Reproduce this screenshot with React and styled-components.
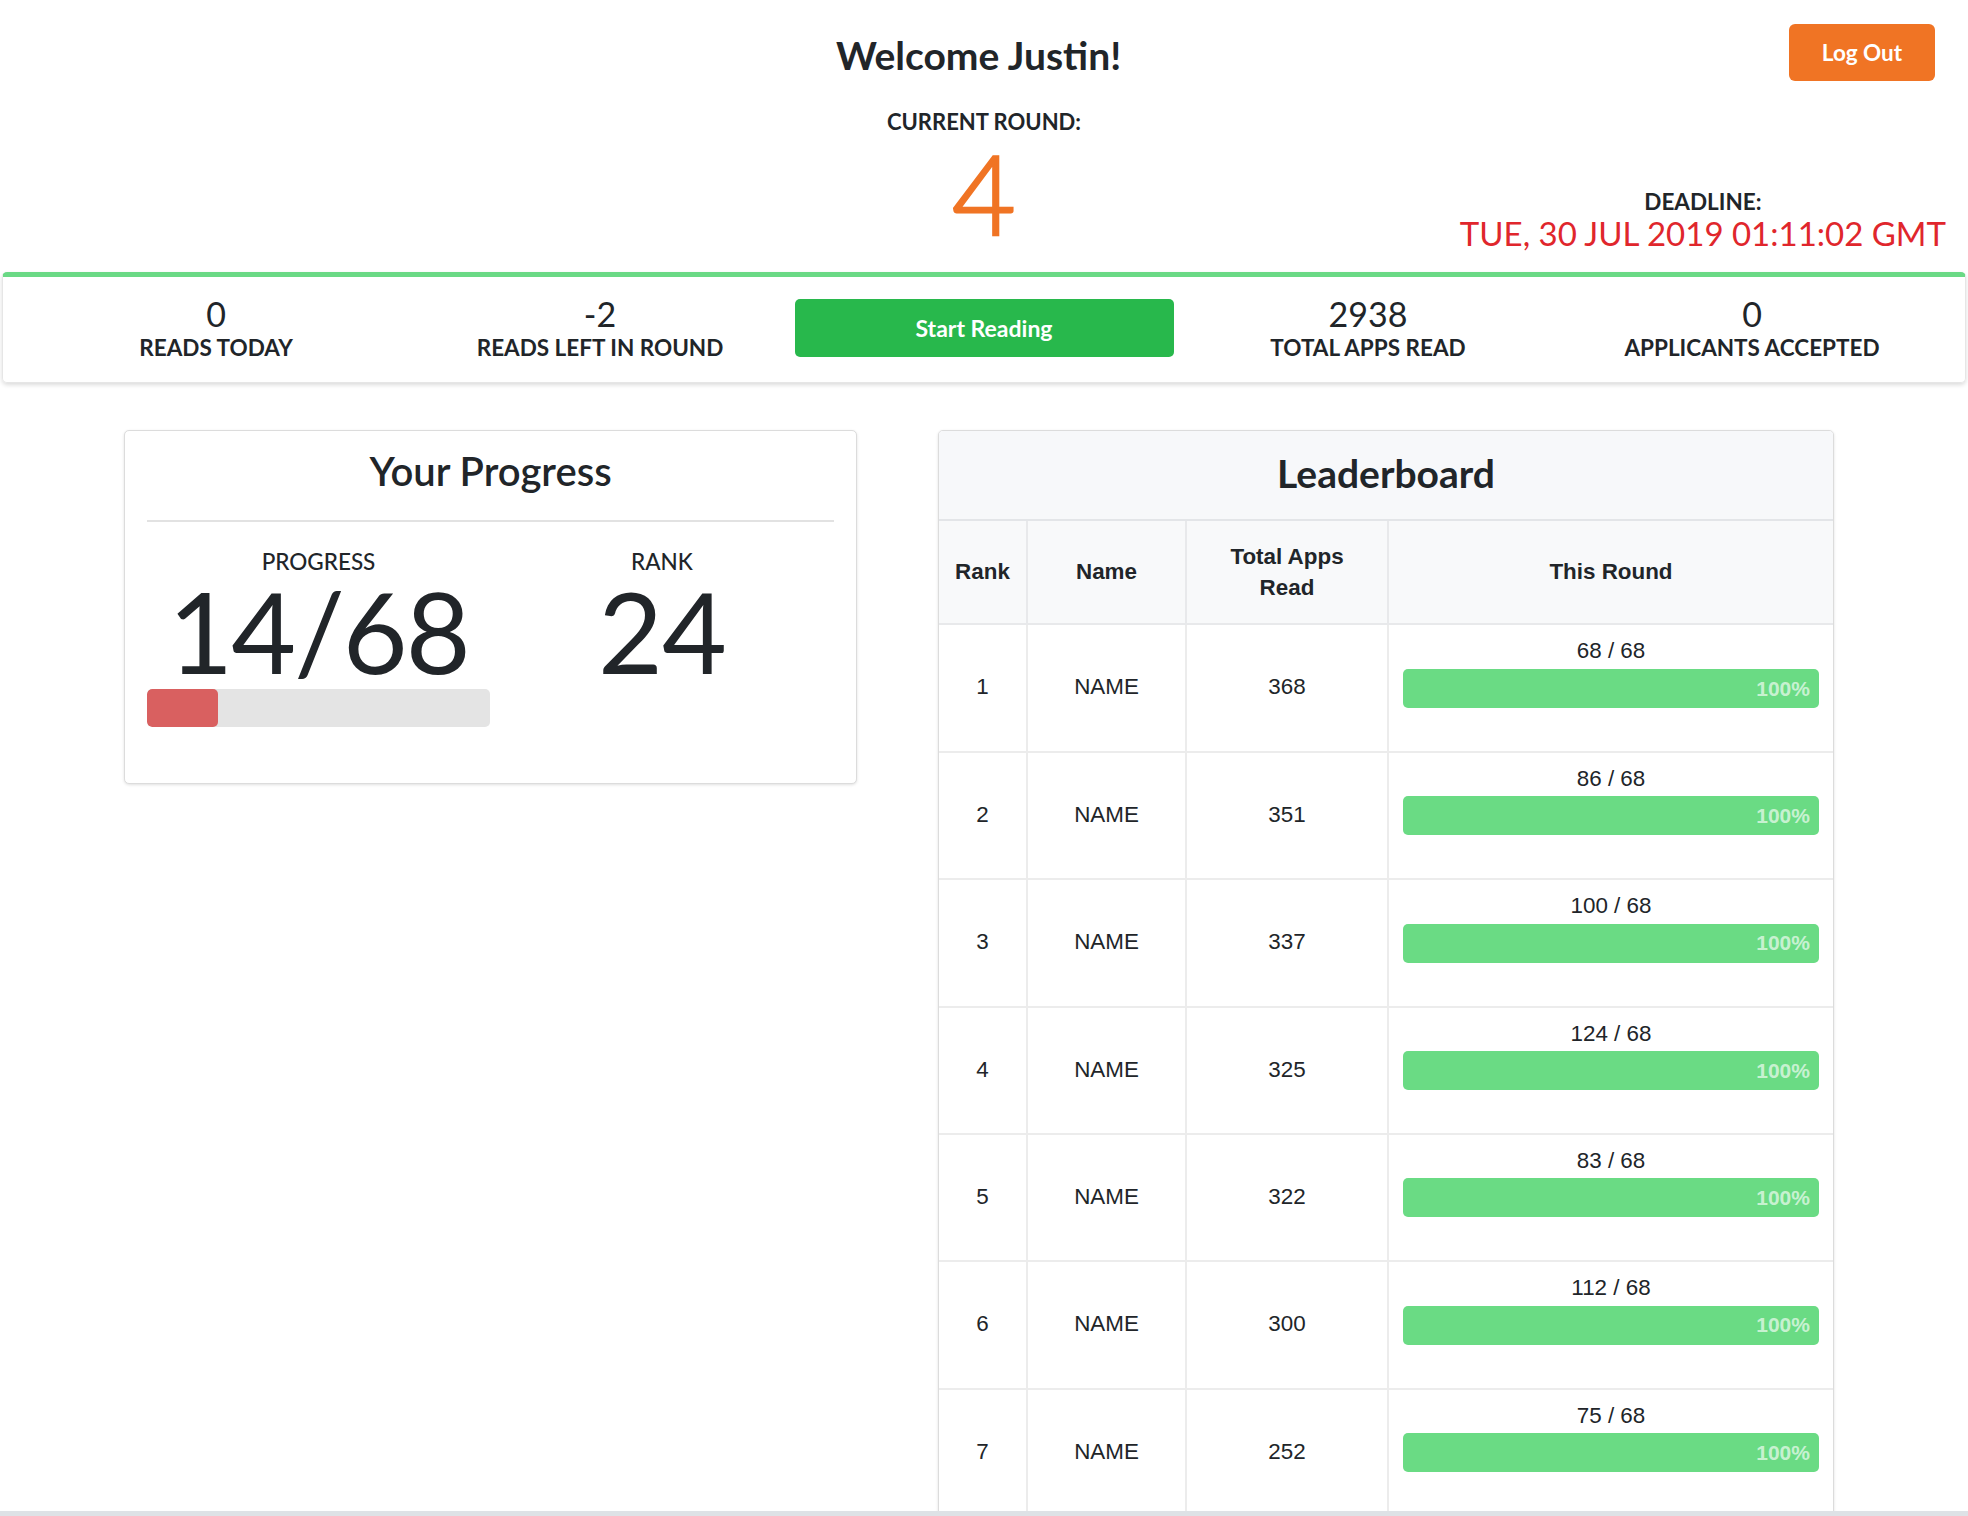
import React from "react";
import styled, { createGlobalStyle } from "styled-components";

const GlobalStyle = createGlobalStyle`
  html, body {
    margin: 0;
    padding: 0;
    overflow: hidden;
    background: #ffffff;
  }
  body {
    font-family: Lato, "Open Sans", "Liberation Sans", sans-serif;
    color: #212529;
  }
  * { box-sizing: border-box; }
`;

const Page = styled.div`
  width: 1968px;
  height: 1516px;
  overflow: hidden;
`;

const Header = styled.header`
  display: grid;
  grid-template-columns: 1fr auto 1fr;
  align-items: start;
`;

const Center = styled.div`
  grid-column: 2;
  display: flex;
  flex-direction: column;
  align-items: center;
  padding-top: 32px;
`;

const Welcome = styled.h1`
  margin: 0 11px 0 0;
  font-size: 39px;
  line-height: 1.2;
  font-weight: 700;
  color: #212529;
`;

const SmallLabel = styled.div`
  font-size: ${(p) => p.$size || 22.5}px;
  line-height: 1.2;
  font-weight: 700;
  text-transform: uppercase;
  color: #212529;
  margin-top: ${(p) => p.$mt || 0}px;
`;

const RoundNumber = styled.div`
  font-size: 110px;
  line-height: 1;
  font-weight: 300;
  color: #f07424;
  -webkit-text-stroke: 2.5px #f07424;
  margin-top: 2px;
`;

const Right = styled.div`
  grid-column: 3;
  display: flex;
  flex-direction: column;
  align-items: flex-end;
`;

const LogOut = styled.button`
  margin: 24px 33px 0 0;
  width: 146px;
  height: 57px;
  border: none;
  border-radius: 6px;
  background: #f07424;
  color: #ffffff;
  font-family: Lato, "Liberation Sans", sans-serif;
  font-size: 22.5px;
  font-weight: 700;
  cursor: pointer;
`;

const Deadline = styled.div`
  margin: 107px 22px 0 0;
  display: flex;
  flex-direction: column;
  align-items: center;
`;

const DeadlineDate = styled.div`
  font-size: 33px;
  line-height: 1.1;
  font-weight: 400;
  color: #e0262c;
  white-space: nowrap;
`;

const StatBar = styled.section`
  margin: 21px 2px 0;
  border: 1px solid #e6e6e6;
  border-top: 5px solid #6ad985;
  border-radius: 5px;
  box-shadow: 0 2px 4px rgba(0, 0, 0, 0.14);
  display: grid;
  grid-template-columns: repeat(5, 1fr);
  align-items: center;
  padding: 17px 21px 21px;
`;

const Stat = styled.div`
  display: flex;
  flex-direction: column;
  align-items: center;
`;

const StatValue = styled.div`
  font-size: 34px;
  line-height: 1.2;
  font-weight: 400;
  color: #212529;
`;

const StatLabel = styled.div`
  font-size: 22.5px;
  line-height: 1.15;
  font-weight: 700;
  color: #212529;
`;

const StartButton = styled.button`
  justify-self: center;
  width: 379px;
  height: 58px;
  border: none;
  border-radius: 5px;
  background: #28b84c;
  color: #ffffff;
  font-family: Lato, "Liberation Sans", sans-serif;
  font-size: 23px;
  font-weight: 700;
  cursor: pointer;
`;

const Main = styled.main`
  display: grid;
  grid-template-columns: 733px 896px;
  column-gap: 81px;
  align-items: start;
  padding-left: 124px;
  margin-top: 47px;
`;

const Card = styled.div`
  border: 1px solid #dcdcdc;
  border-radius: 5px;
  box-shadow: 0 1px 3px rgba(0, 0, 0, 0.12);
  background: #ffffff;
  overflow: hidden;
`;

const ProgressCard = styled(Card)`
  padding: 16px 22px 56px;
`;

const CardTitle = styled.h2`
  margin: 0;
  text-align: center;
  font-size: ${(p) => p.$size || 40}px;
  line-height: 1.2;
  font-weight: ${(p) => p.$weight || 600};
  color: #212529;
`;

const Divider = styled.hr`
  margin: 25px 0 0;
  border: none;
  border-top: 2px solid #e2e2e2;
`;

const ProgressGrid = styled.div`
  display: grid;
  grid-template-columns: 343px 1fr;
  margin-top: 26px;
`;

const ProgressCol = styled.div`
  display: flex;
  flex-direction: column;
  align-items: center;
`;

const ColLabel = styled.div`
  font-size: 22.5px;
  line-height: 1.2;
  font-weight: 500;
  color: #212529;
`;

const BigNumber = styled.div`
  font-size: 112px;
  line-height: 1;
  font-weight: 400;
  color: #212529;
  margin-top: 0;
  letter-spacing: ${(p) => (p.$tight ? -2 : -1)}px;
`;

const Track = styled.div`
  width: 100%;
  height: 38px;
  margin-top: 2px;
  border-radius: 5px;
  background: #e4e4e4;
  overflow: hidden;
`;

const RedFill = styled.div`
  height: 100%;
  border-radius: 5px;
  background: #d96060;
`;

const BoardHeader = styled.div`
  background: #f7f8fa;
  padding: 19px 0 22px;
  border-bottom: 2px solid #e3e5e8;
`;

const Table = styled.table`
  width: 100%;
  border-collapse: collapse;
  table-layout: fixed;
  font-family: "Liberation Sans", Arial, sans-serif;
  font-size: 22.4px;
  line-height: 1.4;
  color: #212529;
`;

const Th = styled.th`
  background: #f8f9fa;
  font-weight: 700;
  text-align: center;
  vertical-align: middle;
  padding: 20px 10px;
  border-left: 2px solid #e8e9eb;
  border-bottom: 2px solid #e8e9eb;
  &:first-child { border-left: none; }
`;

const Td = styled.td`
  text-align: center;
  vertical-align: middle;
  padding: 10px 12px 12px;
  border-left: 2px solid #ececec;
  border-bottom: 2px solid #ececec;
  &:first-child { border-left: none; }
`;

const RoundCell = styled(Td)`
  padding: 10px 14px 12px;
`;

const GreenBar = styled.div`
  height: 39px;
  margin: 2px 0 31px;
  border-radius: 5px;
  background: #6adb84;
  display: flex;
  align-items: center;
  justify-content: flex-end;
  padding-right: 9px;
  color: rgba(255, 255, 255, 0.65);
  font-weight: 700;
  font-size: 21px;
`;

const BottomEdge = styled.div`
  position: fixed;
  left: 0;
  right: 0;
  bottom: 0;
  height: 5px;
  background: #dee2e6;
`;

const leaders = [
  { rank: 1, total: 368, round: 68 },
  { rank: 2, total: 351, round: 86 },
  { rank: 3, total: 337, round: 100 },
  { rank: 4, total: 325, round: 124 },
  { rank: 5, total: 322, round: 83 },
  { rank: 6, total: 300, round: 112 },
  { rank: 7, total: 252, round: 75 },
];

const stats = [
  { value: "0", label: "READS TODAY" },
  { value: "-2", label: "READS LEFT IN ROUND" },
  null,
  { value: "2938", label: "TOTAL APPS READ" },
  { value: "0", label: "APPLICANTS ACCEPTED" },
];

export default function App() {
  const goal = 68;
  const mine = 14;
  return (
    <Page>
      <GlobalStyle />
      <Header>
        <Center>
          <Welcome>Welcome Justin!</Welcome>
          <SmallLabel $mt={30} $size={22}>Current Round:</SmallLabel>
          <RoundNumber>4</RoundNumber>
        </Center>
        <Right>
          <LogOut>Log Out</LogOut>
          <Deadline>
            <SmallLabel>Deadline:</SmallLabel>
            <DeadlineDate>TUE, 30 JUL 2019 01:11:02 GMT</DeadlineDate>
          </Deadline>
        </Right>
      </Header>

      <StatBar>
        {stats.map((s, i) =>
          s ? (
            <Stat key={i}>
              <StatValue>{s.value}</StatValue>
              <StatLabel>{s.label}</StatLabel>
            </Stat>
          ) : (
            <StartButton key={i}>Start Reading</StartButton>
          )
        )}
      </StatBar>

      <Main>
        <ProgressCard>
          <CardTitle $weight={600}>Your Progress</CardTitle>
          <Divider />
          <ProgressGrid>
            <ProgressCol>
              <ColLabel>PROGRESS</ColLabel>
              <BigNumber $tight>
                {mine}/{goal}
              </BigNumber>
              <Track>
                <RedFill style={{ width: `${(mine / goal) * 100}%` }} />
              </Track>
            </ProgressCol>
            <ProgressCol>
              <ColLabel>RANK</ColLabel>
              <BigNumber>24</BigNumber>
            </ProgressCol>
          </ProgressGrid>
        </ProgressCard>

        <Card>
          <BoardHeader>
            <CardTitle $size={39} $weight={700}>
              Leaderboard
            </CardTitle>
          </BoardHeader>
          <Table>
            <colgroup>
              <col style={{ width: 88 }} />
              <col style={{ width: 159 }} />
              <col style={{ width: 202 }} />
              <col />
            </colgroup>
            <thead>
              <tr>
                <Th>Rank</Th>
                <Th>Name</Th>
                <Th>
                  Total Apps
                  <br />
                  Read
                </Th>
                <Th>This Round</Th>
              </tr>
            </thead>
            <tbody>
              {leaders.map((l) => (
                <tr key={l.rank}>
                  <Td>{l.rank}</Td>
                  <Td>NAME</Td>
                  <Td>{l.total}</Td>
                  <RoundCell>
                    <div>
                      {l.round} / {goal}
                    </div>
                    <GreenBar>
                      {Math.min(100, Math.round((l.round / goal) * 100))}%
                    </GreenBar>
                  </RoundCell>
                </tr>
              ))}
            </tbody>
          </Table>
        </Card>
      </Main>
      <BottomEdge />
    </Page>
  );
}
